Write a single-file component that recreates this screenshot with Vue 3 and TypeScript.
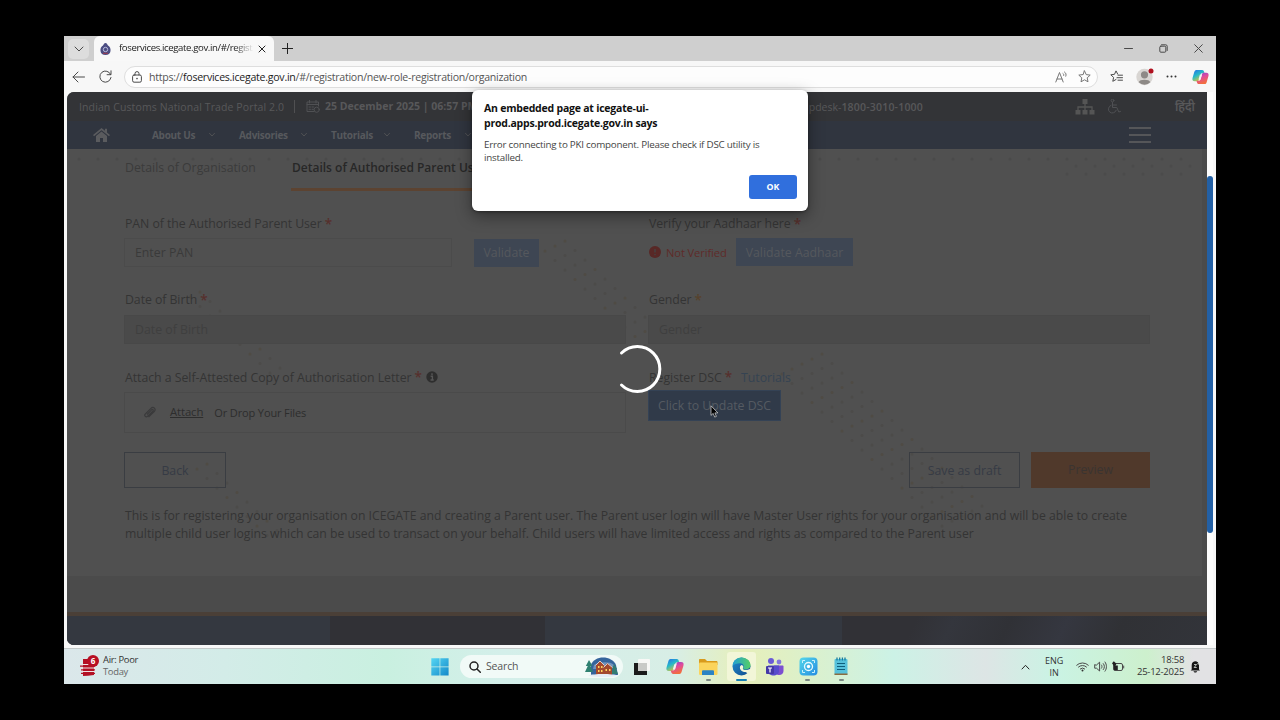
<template>
  <div class="screen">
    <div class="tabstrip">
      <div class="tab-actions"><svg width="10" height="10" viewBox="0 0 10 10"><path d="M1 3l4 4 4-4" class="line" /></svg></div>
      <div class="tab">
        <svg class="favicon" width="11" height="12" viewBox="0 0 11 12">
          <path d="M5.500 0c1.500 0 1.800 1.500 2.500 2.500 2 1 2.800 3 2.500 5.500-.3 2.500-2 4-5 4s-4.700-1.500-5-4C.2 5.500 1 3.500 3 2.500 3.700 1.500 4 0 5.500 0z" fill="#4b4d82" />
          <circle cx="5.500" cy="6.500" r="2.200" fill="none" stroke="#c5c7e4" stroke-width=".9" />
          <path d="M3 10.300h5" stroke="#a03a4a" />
        </svg>
        <span class="tab-title">foservices.icegate.gov.in/#/registr</span>
        <svg width="8" height="8" viewBox="0 0 8 8"><path d="M1 1l6 6M7 1L1 7" class="line dark" /></svg>
      </div>
      <svg class="plus" width="11" height="11" viewBox="0 0 11 11"><path d="M5.500 0v11M0 5.500h11" class="line dark" /></svg>
      <div class="window-controls">
        <svg width="9" height="9" viewBox="0 0 9 9"><path d="M.5 4.500h8" class="line" /></svg>
        <svg width="9" height="9" viewBox="0 0 9 9"><rect x=".8" y="2.200" width="6" height="6" rx="1" class="line" /><path d="M2.500.8h4.200a1.500 1.500 0 0 1 1.500 1.500v4.200" class="line" /></svg>
        <svg width="9" height="9" viewBox="0 0 9 9"><path d="M.7.7l7.600 7.600M8.300.7L.7 8.300" class="line" /></svg>
      </div>
    </div>

    <div class="toolbar">
      <svg class="back" width="13" height="12" viewBox="0 0 13 12"><path d="M12.500 6H1M6 1L1 6l5 5" class="line" /></svg>
      <svg class="reload" width="13" height="13" viewBox="0 0 13 13"><path d="M11.700 4.600A5.600 5.600 0 1 0 12 7.500M12 .8v3.900H8.100" class="line" /></svg>
      <div class="address">
        <svg width="10" height="12" viewBox="0 0 10 12"><rect x=".6" y="4" width="8.800" height="7.200" rx="1.500" class="line" /><path d="M3 4V2.600a2 2 0 0 1 4 0V4" class="line" /><circle cx="5" cy="7.600" r=".8" fill="#444" /></svg>
        <span class="url">https://<b>foservices.icegate.gov.in</b>/#/registration/new-role-registration/organization</span>
        <svg class="read" width="13" height="12" viewBox="0 0 13 12"><path d="M.8 11L4.500 1.500 8.200 11M2 8h5M8 2.500c.8.500 1 1.300.7 2M9.500 1c1.500 1 2 2.500 1.300 4.200" class="line soft" /></svg>
        <svg width="13" height="13" viewBox="0 0 13 13"><path d="M6.500.9l1.700 3.700 4 .5-3 2.700.8 4-3.500-2-3.500 2 .8-4-3-2.700 4-.5z" class="line soft" /></svg>
      </div>
      <svg class="favs" width="13" height="13" viewBox="0 0 13 13"><path d="M7.700 4.100L6 .9 4.500 4.300l-3.700.5 2.800 2.600-.8 3.900L6 9.500M8 5.200h4.500M7 7.700h5.500M8 10.200h4.500" class="line" /></svg>
      <svg class="avatar" width="18" height="18" viewBox="0 0 18 18">
        <circle cx="8.500" cy="9" r="8.200" fill="#d8d5d2" /><circle cx="8.500" cy="6.800" r="3.600" fill="#8d8986" /><path d="M2.700 14.300c.5-3.300 11-3.300 11.600 0a8 8 0 0 1-11.600 0z" fill="#8d8986" />
        <circle cx="15" cy="3" r="2.500" fill="#b0101f" />
      </svg>
      <svg class="dots" width="11" height="3" viewBox="0 0 11 3"><circle v-for="x in [1.500, 5.500, 9.500]" :key="x" :cx="x" cy="1.500" r="1" fill="#333" /></svg>
      <svg class="copilot" width="17" height="16" viewBox="0 0 18 17"><use href="#copilot-mark" /></svg>
    </div>

    <div class="viewport">
      <div class="page">
        <header class="topbar">
          <span class="portal">Indian Customs National Trade Portal 2.0</span>
          <i class="divider"></i>
          <svg width="14" height="13" viewBox="0 0 14 13"><path d="M12.500 6V2H1v9.500h7M1 4.500h11.500M3.500.3V3M10 .3V3M3 7h1.500M6 7h1.500M3 9.300h1.500M6 9.300h1.500" class="line dim" /><circle cx="10.700" cy="9.700" r="2.600" class="line dim" /></svg>
          <strong class="date">25 December 2025 | 06:57 PM</strong>
          <span class="helpdesk">Helpdesk-<b>1800-3010-1000</b></span>
          <svg class="sitemap" width="20" height="17" viewBox="0 0 20 17"><path d="M7.500 1h5v5h-5zM.5 12h5v4.500h-5zM7.500 12h5v4.500h-5zM14.500 12h5v4.500h-5z" fill="#555" /><path d="M10 6v6M3 12V9h14v3" stroke="#555" stroke-width="1.300" fill="none" /></svg>
          <svg class="chair" width="14" height="15" viewBox="0 0 14 15"><circle cx="5.500" cy="1.500" r="1.400" class="line dim" /><path d="M5.500 3.500v5h4.300l2 4.500 1.700-.6M5.500 6h4M4 6.300a4 4 0 1 0 5.200 5" class="line dim" /></svg>
          <span class="hindi">हिंदी</span>
        </header>

        <nav class="nav">
          <svg class="home" width="17" height="14" viewBox="0 0 17 14"><path d="M8.500 0L0 7l1 1.200 7.500-6 7.500 6L17 7l-3-2.500V.8h-2v2z" fill="#5a5b5e" /><path d="M8.500 3.500L3 8v6h4v-4h3v4h4V8z" fill="#5a5b5e" /></svg>
          <span v-for="item in menu" :key="item.label" class="menu-item" :style="{ width: item.width + 'px' }">
            {{ item.label }}
            <svg width="8" height="6" viewBox="0 0 8 6"><path d="M1.500 1.300L4 4l2.500-2.700" class="line dim" /></svg>
          </span>
          <div class="burger"><i></i><i></i><i></i></div>
        </nav>

        <main class="card">
          <svg class="confetti" width="1140" height="427" viewBox="0 0 1140 427">
            <circle v-for="(d, i) in confetti" :key="i" :cx="d.x" :cy="d.y" r="1.500" :fill="d.fill" />
          </svg>

          <div class="steps">
            <span class="step">Details of Organisation</span>
            <span class="step active">Details of Authorised Parent User</span>
          </div>

          <div class="grid">
            <div class="field">
              <label><span>PAN of the Authorised Parent User</span> <em>*</em></label>
              <div class="inline">
                <div class="input pan">Enter PAN</div>
                <div class="btn validate">Validate</div>
              </div>
            </div>
            <div class="field">
              <label><span>Verify your Aadhaar here</span> <em>*</em></label>
              <div class="inline">
                <svg class="bang" width="12" height="12" viewBox="0 0 12 12"><circle cx="6" cy="6" r="6" fill="#582826" /><path d="M6 3v3.500M6 8v1.200" stroke="#444" stroke-width="1.400" /></svg>
                <span class="not-verified">Not Verified</span>
                <div class="btn aadhaar">Validate Aadhaar</div>
              </div>
            </div>
            <div class="field">
              <label><span>Date of Birth</span> <em>*</em></label>
              <div class="input disabled">Date of Birth</div>
            </div>
            <div class="field">
              <label><span>Gender</span> <em class="gold">*</em></label>
              <div class="input disabled">Gender</div>
            </div>
            <div class="field last">
              <label>
                <span>Attach a Self-Attested Copy of Authorisation Letter</span> <em>*</em>
                <svg class="info" width="12" height="12" viewBox="0 0 12 12"><circle cx="6" cy="6" r="5.700" fill="#2e2e2e" /><path d="M4.600 5.300h1.800v3.400M4.500 9h3.200M6 2.300v1.700" stroke="#575757" stroke-width="1.400" fill="none" /></svg>
              </label>
              <div class="drop">
                <svg width="13" height="13" viewBox="0 0 13 13"><path d="M4 8.500l4.800-4.800c.8-.8 2 .4 1.200 1.200L4.700 10.200C3 11.900.7 9.600 2.400 7.900L8 2.300c2.500-2.500 5.500.9 3.200 3.200L5.500 11" fill="none" stroke="#3a3a3b" stroke-width="1.200" /></svg>
                <span class="attach">Attach</span>
                <span class="or">Or Drop Your Files</span>
              </div>
            </div>
            <div class="field last">
              <label><span>Register DSC</span> <em>*</em> <a>Tutorials</a></label>
              <div class="btn dsc">Click to Update DSC</div>
            </div>
          </div>

          <div class="actions">
            <div class="outline back-btn">Back</div>
            <div class="outline draft">Save as draft</div>
            <div class="preview">Preview</div>
          </div>

          <p class="note">
            This is for registering your organisation on ICEGATE and creating a Parent user. The Parent user login will have Master User rights for your organisation and will be able to create<br />
            multiple child user logins which can be used to transact on your behalf. Child users will have limited access and rights as compared to the Parent user
          </p>
        </main>
        <footer class="footer"><i class="f1"></i><i class="f2"></i><i class="f3"></i><i class="f4"></i></footer>
      </div>
      <div class="scroll"><i></i></div>
    </div>

    <div class="taskbar">
      <svg class="air" width="20" height="22" viewBox="0 0 20 22">
        <path d="M3 4h11v16l-6 .8-5 .2z" fill="#b31024" /><path d="M1 9.500h13M1 13h15M2 16.500h12" stroke="#efe2e4" stroke-width="1" /><path d="M0 11.200h15M1 14.800h14M1 18.300h14" stroke="#b31024" stroke-width="1.200" />
        <circle cx="13" cy="6" r="6" fill="#b80f24" /><text x="13" y="9" text-anchor="middle" class="badge">6</text>
      </svg>
      <div class="weather"><span>Air: Poor</span><small>Today</small></div>

      <svg class="start" width="18" height="18" viewBox="0 0 18 18">
        <defs><linearGradient id="win" x2="1" y2="1"><stop stop-color="#55d6f3" /><stop offset="1" stop-color="#1389c9" /></linearGradient></defs>
        <path d="M.3.300h8.300v8.300H.3zM9.300.3h8.300v8.300H9.300zM.3 9.300h8.300v8.300H.3zM9.300 9.300h8.300v8.300H9.300z" fill="url(#win)" />
      </svg>
      <div class="search">
        <svg width="12" height="12" viewBox="0 0 12 12"><circle cx="5" cy="5" r="4" class="line dark thick" /><path d="M8 8l3.300 3.300" class="line dark thick" /></svg>
        <span>Search</span>
        <svg class="village" width="34" height="20" viewBox="0 0 34 20">
          <path d="M6 18V8c3-10 21-10 25 0l2 10z" fill="#35649c" /><path d="M9 8c4-3 16-4 20 0l1 4H8z" fill="#6f93bd" />
          <path d="M4 3L.8 9h2L0 15h8L5.500 9h2z" fill="#2f8171" /><path d="M29 7l-2 5h1l-2 5h7l-2-5h1z" fill="#327c72" />
          <path d="M11 8l4-4 4 4v10h-8zM18 10l4.500-4 4.500 4v8h-9z" fill="#a3492e" /><path d="M10.500 8.500L15 4l4.500 4.500M18.500 10.500l4-4 5 4" fill="none" stroke="#dcc9c9" stroke-width="1" />
          <path d="M13 9h1.500v2H13zM16 9h1.500v2H16zM13 13h1.500v2H13zM16 13h1.500v2H16zM20.500 12H22v2h-1.500zM24 12h1.500v2H24z" fill="#ffd35c" /><path d="M3 18.500c6-2 24-2 30 0-7 2-23 2-30 0z" fill="#e5edf5" />
        </svg>
      </div>
      <div class="apps">
        <div class="app"><svg width="18" height="18" viewBox="0 0 18 18"><rect x="5" y="1" width="12" height="12" rx="1" fill="#f8f8f6" /><path d="M1 5h4v8h9v4H1z" fill="#1b1b1b" /><path d="M5 5h9v8H5z" fill="#c9cac7" /></svg></div>
        <div class="app">
          <svg width="18" height="17" viewBox="0 0 18 17">
            <defs>
              <linearGradient id="cpa" x2="0.6" y2="1"><stop stop-color="#2769e8" /><stop offset=".5" stop-color="#25b9c9" /><stop offset="1" stop-color="#e7c82e" /></linearGradient>
              <linearGradient id="cpb" x2="0.4" y2="1"><stop stop-color="#7d45dc" /><stop offset=".5" stop-color="#e14b9b" /><stop offset="1" stop-color="#f26e3e" /></linearGradient>
              <g id="copilot-mark">
                <path d="M4.500 1h6.300c1.200 0 1.700.8 2 1.900l.5 1.700h-2.500c-1 0-1.500.6-1.800 1.600l-1.500 5c-.4 1.200-1 1.800-2.200 1.800H3c-2.500 0-3-1.700-2.400-3.800l1.700-5.700C2.700 2 3.300 1 4.500 1z" fill="url(#cpa)" />
                <path d="M13.500 16H7.200c-1.200 0-1.700-.8-2-1.900l-.5-1.700h2.500c1 0 1.500-.6 1.800-1.600l1.500-5c.4-1.200 1-1.800 2.200-1.800H15c2.500 0 3 1.700 2.400 3.800l-1.700 5.700c-.4 1.500-1 2.500-2.200 2.500z" fill="url(#cpb)" />
                <path d="M8.300 6.200h2.300l-1.500 5H6.900z" fill="#f3f1ee" />
              </g>
            </defs>
            <use href="#copilot-mark" />
          </svg>
        </div>
        <div class="app running"><svg width="20" height="18" viewBox="0 0 20 18"><path d="M1 2c0-.6.400-1 1-1h5l2 2h9.500c.5 0 1 .5 1 1v3H1z" fill="#d89a1c" /><rect x="1" y="4.500" width="18.500" height="12.500" rx="1.200" fill="#fbd45c" /><path d="M4 17v-3.500c0-.8.500-1.300 1.300-1.300h9.400c.8 0 1.300.5 1.300 1.300V17z" fill="#2b83c4" /></svg></div>
        <div class="app running active">
          <svg width="19" height="19" viewBox="0 0 19 19">
            <defs><linearGradient id="edg" x2="1"><stop stop-color="#219fd5" /><stop offset="1" stop-color="#55cf64" /></linearGradient><linearGradient id="edb" x2="1" y2="1"><stop stop-color="#1e8dd0" /><stop offset="1" stop-color="#134b8c" /></linearGradient></defs>
            <circle cx="9.500" cy="9.500" r="9" fill="url(#edb)" />
            <path d="M.6 8.700C1 3.500 5 .5 9.500.5c5.200 0 9 3.700 9 7.600 0 2.900-2.300 4.400-4.700 4.400-2.200 0-3-.8-2.500-1.600 1-1.600.2-4.600-3.300-4.600-3 0-6.400 1-7.400 2.400z" fill="url(#edg)" />
            <path d="M10.900 11.200c-.3 1 .7 1.900 3 1.900 1.500 0 2.800-.4 3.800-1.100l1.300 1.500-3 3c-.8-.5-1.500-1.300-2.500-1.600-3.300 0-5.600-2-5.600-4.500 0-1.300.6-2 1.700-2.500 1.700.6 2.100 1.800 1.300 3.300z" fill="#f2f6d8" />
          </svg>
        </div>
        <div class="app"><svg width="19" height="19" viewBox="0 0 19 19"><circle cx="6" cy="4" r="3" fill="#6a5bd6" /><circle cx="14" cy="5" r="2.400" fill="#8276dd" /><path d="M9 8.500h8.500c.5 0 1 .4 1 1v4.500c0 5-6.500 5-8 2z" fill="#7b4fd0" /><path d="M3 8.500h11V14c0 6-11 6-11 0z" fill="#574ccc" /><rect x="1" y="9" width="8" height="8" rx="1" fill="#4439a7" /><path d="M3 11h4M5 11v4.500" stroke="#fff" stroke-width="1.200" /></svg></div>
        <div class="app running"><svg width="19" height="19" viewBox="0 0 19 19"><defs><linearGradient id="cam" x2="1" y2="1"><stop stop-color="#55d8ea" /><stop offset="1" stop-color="#248ce2" /></linearGradient></defs><rect x=".5" y=".5" width="18" height="18" rx="4" fill="url(#cam)" /><circle cx="9.500" cy="9.500" r="4" fill="none" stroke="#e8fbff" stroke-width="1.300" /><circle cx="9.500" cy="9.500" r="1.700" fill="#fff" /><path d="M3.500 6V3.500H6M13 3.500h2.500V6M15.500 13v2.500H13M6 15.500H3.500V13" fill="none" stroke="#c8f0fb" stroke-width="1" /></svg></div>
        <div class="app running"><svg width="16" height="19" viewBox="0 0 16 19"><rect x="1.500" y="2" width="13" height="16" rx="1" fill="#56c2dc" /><path d="M1.500 16.500h13v1.500h-13z" fill="#8a6c40" /><path d="M4 .5v3M6.700.5v3M9.400.5v3M12 .5v3" stroke="#167b9e" stroke-width="1.300" /><path d="M4 6.500h8M4 9.500h8M4 12.500h8" stroke="#0f607d" stroke-width="1.200" /></svg></div>
      </div>

      <svg class="up" width="9" height="6" viewBox="0 0 9 6"><path d="M1 5l3.500-3.700L8 5" class="line dark" /></svg>
      <div class="lang">ENG<br />IN</div>
      <svg class="wifi" width="13" height="11" viewBox="0 0 13 11"><path d="M.7 4.200a8.300 8.300 0 0 1 11.600 0M2.500 6a5.800 5.800 0 0 1 8 0M4.300 7.900a3.300 3.300 0 0 1 4.400 0" class="line" /><circle cx="6.500" cy="9.500" r="1" fill="#333" /></svg>
      <svg class="vol" width="13" height="11" viewBox="0 0 13 11"><path d="M.7 4v3.200H2.500L5.600 10V1.200L2.500 4zM7.500 4c.7 1 .7 2.200 0 3.200M9.300 2.600c1.500 1.800 1.500 4.200 0 6M11 1c2 2.700 2 6.500 0 9.200" class="line" /></svg>
      <svg class="bat" width="13" height="11" viewBox="0 0 13 11"><rect x="1.500" y="2.500" width="9" height="7" rx="1.500" class="line" /><path d="M11.700 5v2" class="line" /><path d="M0 2.200L1.800.3l2.700 2.500-1 1.700h2.300V9H2V5z" fill="#222" /></svg>
      <div class="clock">18:58<br />25-12-2025</div>
      <svg class="bell" width="11" height="13" viewBox="0 0 11 13"><path d="M1.700 9.500V5c0-5 7.300-5 7.300 0v4.500l1 1H.7zM3.500 11.200h3.700c-.4 1.800-3.300 1.800-3.700 0z" fill="#151515" /><path d="M4 4.500h2.500L4.200 7.500h2.500M7.500 1.500h2.200L7.700 4h2.200" stroke="#e0e4df" stroke-width=".8" fill="none" /></svg>
    </div>

    <!-- busy indicator of the page below the alert -->
    <svg class="spinner" width="50" height="50" viewBox="0 0 50 50"><path d="M9.500 9A22.500 22.500 0 1 1 9.500 41" fill="none" stroke="#fff" stroke-width="3" stroke-linecap="round" /></svg>
    <svg class="cursor" width="9" height="13" viewBox="0 0 9 13"><path d="M1 .8v9.600l2.200-2 1.500 3.700 1.700-.7-1.500-3.500h3z" fill="#000" stroke="#ddd" stroke-width=".7" /></svg>

    <div class="dialog">
      <div class="dialog-title">An embedded page at icegate-ui-<br />prod.apps.prod.icegate.gov.in says</div>
      <div class="dialog-text">Error connecting to PKI component. Please check if DSC utility is<br />installed.</div>
      <button class="ok">OK</button>
    </div>
  </div>
</template>

<script setup lang="ts">
interface MenuItem {
  label: string
  width: number
}

interface Dot {
  x: number
  y: number
  fill: string
}

const menu: MenuItem[] = [
  { label: 'About Us', width: 64 },
  { label: 'Advisories', width: 69 },
  { label: 'Tutorials', width: 60 },
  { label: 'Reports', width: 58 },
]

// Diagonal bands of small dots: start x, start y, number of steps, rows
const bands = [
  [478, 102, 11, 3],
  [123, 148, 9, 2],
  [130, 320, 8, 2],
  [715, 225, 17, 5],
]

const confetti: Dot[] = []
for (const [x0, y0, steps, rows] of bands) {
  for (let r = 0; r < rows; r++) {
    for (let s = 0; s < steps; s++) {
      const y = y0 + s * 9.500 - r * 5
      if (y < 400) confetti.push({ x: x0 + s * 10 + r * 10, y, fill: s % 3 ? '#4c4b49' : '#4f4b44' })
    }
  }
}
// Row under the navigation
for (let x = 12; x < 1130; x += 19) {
  confetti.push({ x, y: 10, fill: '#4a4a4a' })
}
for (let x = 1000; x < 1130; x += 19) {
  confetti.push({ x: x + 9, y: 17, fill: '#4b4b4b' }, { x, y: 25, fill: '#4b4b4b' })
}
</script>

<style>
body {
  margin: 0;
  background: #000;
}
</style>

<style scoped>
.screen {
  position: relative;
  width: 1152px;
  height: 648px;
  margin: 36px 64px;
  display: flex;
  flex-direction: column;
  background: #f8f8f8;
  overflow: hidden;
  font-family: 'Open Sans', 'Noto Sans', sans-serif;
  white-space: nowrap;
}

svg {
  display: block;
  flex: none;
}

.line {
  fill: none;
  stroke: #4a4a4a;
  stroke-width: 1;
  stroke-linecap: round;
  stroke-linejoin: round;
}
.line.dark { stroke: #222; }
.line.soft { stroke: #777; }
.line.dim { stroke: #505154; }
.line.thick { stroke-width: 1.5; }

/* Browser window */
.tabstrip {
  height: 25px;
  display: flex;
  align-items: center;
  background: #cfcfcf;
}
.tab-actions {
  width: 21px;
  height: 20px;
  margin: 0 5px 0 4px;
  border-radius: 5px;
  background: #dddddd;
  display: grid;
  place-items: center;
}
.tab {
  width: 180px;
  height: 25px;
  box-sizing: border-box;
  padding: 0 7px 0 6px;
  display: flex;
  align-items: center;
  background: #f8f8f8;
  border-radius: 6px 6px 0 0;
}
.tab-title {
  width: 134px;
  margin: -2px 5px 0 8px;
  font-size: 9.6px;
  letter-spacing: -0.38px;
  color: #222;
  mask-image: linear-gradient(90deg, #000 115px, rgba(0, 0, 0, 0.1) 133px);
}
.plus { margin-left: 8px; }
.window-controls {
  display: flex;
  gap: 26px;
  margin-left: auto;
  margin-right: 13px;
}
.toolbar {
  height: 31px;
  display: flex;
  align-items: center;
  background: #f7f7f7;
}
.back { margin-left: 8px; }
.reload { margin-left: 14px; }
.address {
  width: 974px;
  height: 22px;
  box-sizing: border-box;
  margin-left: 12px;
  padding: 0 6px 0 7px;
  display: flex;
  align-items: center;
  border: 1px solid #dedede;
  border-radius: 12px;
  background: #fdfdfd;
}
.url {
  margin-left: 7px;
  font-size: 10.6px;
  color: #555;
  letter-spacing: -0.27px;
}
.url b {
  font-weight: 400;
  color: #1c1c1c;
}
.read { margin: 0 10px 0 auto; }
.favs { margin-left: 12px; }
.avatar { margin-left: 13px; }
.dots { margin-left: 12px; }
.copilot { margin-left: 15px; }

.viewport {
  height: 553px;
  display: flex;
  padding-left: 3px;
}
.page {
  width: 1140px;
  display: flex;
  flex-direction: column;
  background: #4b4b4b;
  border-radius: 7px 0 0 7px;
  overflow: hidden;
}
.scroll {
  width: 6px;
  background: #fdfdfd;
}
.scroll i {
  display: block;
  height: 357px;
  margin-top: 84px;
  border-radius: 3px;
  background: #2360a5;
}

/* Portal header */
.topbar {
  height: 29px;
  display: flex;
  align-items: center;
  padding-left: 12px;
  background: #333437;
  color: #58585a;
  font-size: 10.5px;
}
.portal {
  width: 205px;
  letter-spacing: 0.11px;
}
.divider {
  width: 1px;
  height: 13px;
  margin: 0 11px 0 10px;
  background: #505052;
}
.date {
  margin: -1px 0 0 5px;
  width: 380px;
  font-weight: 700;
}
.helpdesk {
  width: 218px;
  text-align: right;
}
.helpdesk b {
  font-weight: 600;
  letter-spacing: 0.2px;
}
.sitemap { margin-left: 152px; }
.chair { margin-left: 12px; }
.hindi {
  margin-left: 54px;
  font-size: 12px;
  font-weight: 600;
}
.nav {
  height: 28px;
  display: flex;
  align-items: center;
  padding-left: 26px;
  background: #30353f;
  color: #57595d;
  font-size: 10px;
  letter-spacing: -0.28px;
  font-weight: 700;
}
.home { margin-right: 42px; }
.menu-item {
  display: flex;
  justify-content: space-between;
  align-items: center;
  margin-right: 23px;
}
.burger {
  width: 22px;
  margin-left: auto;
  margin-right: 56px;
}
.burger i {
  display: block;
  height: 2px;
  background: #555659;
}
.burger i + i { margin-top: 5px; }

/* Registration form */
.card {
  position: relative;
  height: 427px;
  margin-right: 5px;
  box-sizing: border-box;
  padding-left: 57px;
  background: #505050;
  color: #343434;
  font-size: 12px;
}
.confetti {
  position: absolute;
  top: 0;
  left: 0;
}
.steps, .grid, .actions, .note { position: relative; }
.steps {
  height: 42px;
  display: flex;
  line-height: 38px;
}
.step {
  width: 167px;
  height: 42px;
  padding-left: 1px;
  box-sizing: border-box;
  font-size: 12.3px;
  color: #3b3b3b;
}
.step.active {
  width: 216px;
  padding-left: 1px;
  border-bottom: 3px solid #5c4331;
  color: #272727;
  font-size: 12px;
  font-weight: 600;
}
.grid {
  display: grid;
  grid-template-columns: 502px 502px;
  grid-template-rows: 76px 77px 65px;
  column-gap: 22px;
  padding-top: 24px;
}
.field {
  display: flex;
  flex-direction: column;
}
label {
  display: flex;
  align-items: center;
  height: 17px;
  padding-left: 1px;
  margin-bottom: 6px;
  font-size: 12.3px;
  letter-spacing: -0.06px;
}
.last label {
  height: 18px;
  letter-spacing: -0.03px;
}
em {
  margin-left: 3px;
  font-size: 13.5px;
  font-style: normal;
  font-weight: 600;
  color: #572f2c;
}
em.gold { color: #57422c; }
.inline {
  display: flex;
  align-items: center;
}
.input {
  height: 29px;
  box-sizing: border-box;
  padding-left: 10px;
  border: 1px solid #4b4b4b;
  display: flex;
  align-items: center;
  color: #3a3a3a;
  font-size: 12.3px;
}
.pan {
  width: 328px;
  margin-right: 22px;
}
.disabled {
  margin-top: 1px;
  background: #4a4a4a;
  border-color: #484848;
  color: #3f3f3f;
}
.btn {
  height: 28px;
  display: flex;
  align-items: center;
  justify-content: center;
  background: #3e4653;
  color: #55585d;
  font-size: 12.3px;
}
.validate { width: 65px; }
.bang { margin: 0 5px 0 1px; }
.not-verified {
  width: 70px;
  font-size: 11.2px;
  font-weight: 500;
  letter-spacing: -0.12px;
  color: #5f2b29;
}
.aadhaar { width: 117px; }
.drop {
  height: 42px;
  box-sizing: border-box;
  border: 1px solid #4a4a4a;
  display: flex;
  align-items: center;
  padding-left: 18px;
  color: #2d2d2d;
}
.attach {
  margin: -3px 11px 0 14px;
  font-size: 11.3px;
  letter-spacing: -0.1px;
  text-decoration: underline;
}
.or {
  font-size: 11px;
  letter-spacing: -0.12px;
}
.info { margin-left: 4px; }
a {
  margin-left: 9px;
  color: #354352;
}
.dsc {
  width: 133px;
  height: 31px;
  margin-top: -2px;
  box-sizing: border-box;
  border: 1px solid #344255;
  background: #303a49;
  color: #555a62;
}
.actions {
  display: flex;
  margin-top: 19px;
}
.actions > div {
  height: 36px;
  box-sizing: border-box;
  line-height: 35px;
  text-align: center;
  font-size: 12.3px;
}
.outline {
  border: 1px solid #3a3d42;
  color: #363b45;
}
.back-btn { width: 102px; }
.draft {
  width: 111px;
  margin-left: 683px;
}
.preview {
  width: 119px;
  margin-left: 11px;
  background: #50392b;
  color: #3a3431;
}
.note {
  margin: 19px 0 0 1px;
  line-height: 18px;
  font-size: 12.23px;
}
.footer {
  height: 29px;
  margin-top: 36px;
  display: flex;
  border-top: 4px solid #4a3f37;
  background: #333338;
}
.footer i { height: 29px; }
.f1 { width: 263px; background: #343840; }
.f2 { width: 215px; background: #313136; }
.f3 { width: 297px; background: #343840; }
.f4 { width: 365px; background: linear-gradient(115deg, #313136 20%, #34363d 30%, #303136 45%, #353740 60%, #303135 75%, #32343a); }

/* Taskbar */
.taskbar {
  height: 36px;
  margin-top: 3px;
  display: flex;
  align-items: center;
  box-sizing: border-box;
  border-top: 1px solid #c4c9c9;
  color: #333;
  background: linear-gradient(90deg, #dbe7ea 0, #d3ece8 14%, #c9f0e0 28%, #d4efea 38%, #d8eee6 53%, #e6efba 59%, #dff0c6 63%, #ccf2e6 72%, #dde5e5 80%, #caf3e4 86%, #cdf0cd 94%, #e2e2e4 98%);
}
.air {
  margin-left: 16px;
  margin-top: -2px;
}
.badge {
  font-size: 8px;
  font-weight: 700;
  fill: #fff;
}
.weather {
  width: 60px;
  margin: -1px 0 0 3px;
  font-size: 9.4px;
  line-height: 12px;
  letter-spacing: -0.3px;
}
.weather small {
  display: block;
  font-size: inherit;
  color: #666;
}
.start { margin-left: 268px; }
.search {
  width: 163px;
  height: 23px;
  box-sizing: border-box;
  margin-left: 11px;
  padding: 0 4px 0 9px;
  display: flex;
  align-items: center;
  border-radius: 12px;
  background: #f1faf7;
  font-size: 10.5px;
  letter-spacing: -0.15px;
  color: #555;
}
.search span { margin: -1px 0 0 5px; }
.village { margin-left: auto; }
.apps {
  display: flex;
  margin-left: 4px;
  gap: 4px;
}
.app {
  position: relative;
  width: 29.3px;
  height: 29px;
  border-radius: 3px;
  display: grid;
  place-items: center;
}
.app.active { background: #f2f6d8; }
.running::after {
  content: '';
  position: absolute;
  left: 12px;
  bottom: 0;
  width: 5px;
  height: 2px;
  border-radius: 1px;
  background: #7c8885;
}
.active::after {
  left: 9px;
  width: 11px;
  background: #1680b5;
}
.up { margin-left: 165px; }
.lang {
  width: 26px;
  margin-left: 11px;
  text-align: center;
  font-size: 9px;
  line-height: 12px;
}
.wifi { margin-left: 9px; }
.vol { margin-left: 5px; }
.bat { margin-left: 5px; }
.clock {
  width: 59px;
  margin-top: -1px;
  text-align: right;
  font-size: 9.5px;
  line-height: 12px;
  letter-spacing: -0.25px;
}
.bell { margin-left: 6px; }

/* Floating layers */
.spinner {
  position: absolute;
  left: 548px;
  top: 308px;
}
.cursor {
  position: absolute;
  left: 646px;
  top: 369px;
}
.dialog {
  position: absolute;
  left: 408px;
  top: 54px;
  width: 336px;
  height: 121px;
  box-sizing: border-box;
  padding: 11px 11px 11px 12px;
  border-radius: 6px;
  background: #fff;
  box-shadow: 0 5px 16px rgba(0, 0, 0, 0.4), 0 1px 3px rgba(0, 0, 0, 0.35);
}
.dialog-title {
  font-size: 10.5px;
  font-weight: 700;
  line-height: 14.5px;
  letter-spacing: -0.22px;
  color: #111;
}
.dialog-text {
  margin-top: 8px;
  font-size: 9.8px;
  line-height: 13px;
  letter-spacing: -0.23px;
  color: #444;
}
.ok {
  display: block;
  width: 48px;
  height: 24px;
  margin: 11px 0 0 auto;
  padding: 0;
  border: 0;
  border-radius: 3px;
  background: #306fdd;
  color: #fff;
  font: 700 8.8px 'Open Sans', sans-serif;
}
</style>
